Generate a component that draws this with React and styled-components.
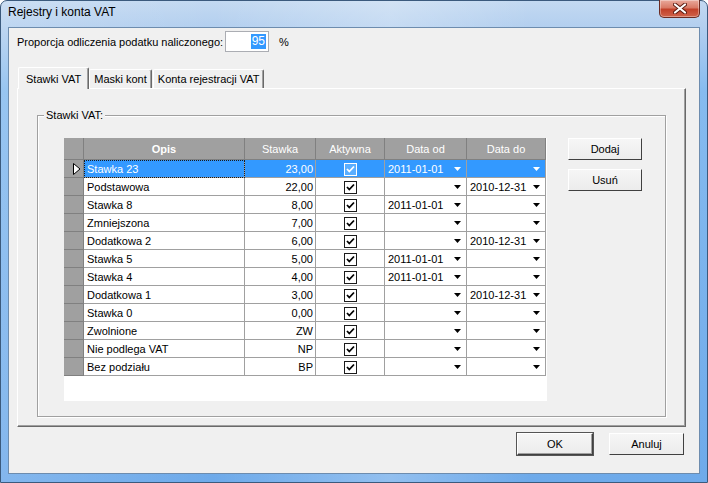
import React from 'react'
import styled, { createGlobalStyle } from 'styled-components'

const GlobalStyle = createGlobalStyle`
  html, body {
    margin: 0;
    padding: 0;
    background: #fff;
  }
  body {
    font-family: "Liberation Sans", Arial, sans-serif;
    font-size: 11px;
    color: #000;
  }
`

const rates = [
  { name: 'Stawka 23', rate: '23,00', from: '2011-01-01', to: '' },
  { name: 'Podstawowa', rate: '22,00', from: '', to: '2010-12-31' },
  { name: 'Stawka 8', rate: '8,00', from: '2011-01-01', to: '' },
  { name: 'Zmniejszona', rate: '7,00', from: '', to: '' },
  { name: 'Dodatkowa 2', rate: '6,00', from: '', to: '2010-12-31' },
  { name: 'Stawka 5', rate: '5,00', from: '2011-01-01', to: '' },
  { name: 'Stawka 4', rate: '4,00', from: '2011-01-01', to: '' },
  { name: 'Dodatkowa 1', rate: '3,00', from: '', to: '2010-12-31' },
  { name: 'Stawka 0', rate: '0,00', from: '', to: '' },
  { name: 'Zwolnione', rate: 'ZW', from: '', to: '' },
  { name: 'Nie podlega VAT', rate: 'NP', from: '', to: '' },
  { name: 'Bez podziału', rate: 'BP', from: '', to: '' },
]

const columns = [20, 161, 71, 69, 82, 79]

const DropArrow = () => (
  <ArrowIcon width="7" height="4" viewBox="0 0 7 4">
    <polygon points="0,0 7,0 3.5,4" fill="currentColor" />
  </ArrowIcon>
)

const CheckMark = () => (
  <svg width="11" height="11" viewBox="0 0 11 11">
    <path d="M2 5 L4.3 7.5 L9 2.5" fill="none" stroke="currentColor" strokeWidth="1.8" />
  </svg>
)

const RowPointer = () => (
  <svg width="8" height="12" viewBox="0 0 8 12">
    <polygon points="0.5,0.5 7,6 0.5,11.5" fill="#fff" stroke="#000" strokeWidth="1" />
  </svg>
)

const App = () => {
  return (
    <>
      <GlobalStyle />
      <Window>
        <TitleBar>
          <Title>Rejestry i konta VAT</Title>
          <CloseButton>
            <svg width="14" height="11" viewBox="0 0 14 11">
              <path d="M2 1.5 L12 9.5 M12 1.5 L2 9.5" stroke="#5a1a10" strokeWidth="4" strokeLinecap="round" />
              <path d="M2 1.5 L12 9.5 M12 1.5 L2 9.5" stroke="#fff" strokeWidth="2.2" strokeLinecap="round" />
            </svg>
          </CloseButton>
        </TitleBar>
        <Client>
          <ProportionRow>
            <FieldLabel>Proporcja odliczenia podatku naliczonego:</FieldLabel>
            <NumberBox><SelectedText>95</SelectedText></NumberBox>
            <Percent>%</Percent>
          </ProportionRow>

          <TabStrip>
            <Tab $active>Stawki VAT</Tab>
            <Tab>Maski kont</Tab>
            <Tab $gap>Konta rejestracji VAT</Tab>
          </TabStrip>

          <TabPanel>
            <GroupBox>
              <GroupLabel>Stawki VAT:</GroupLabel>
              <Grid>
                <Table>
                  <colgroup>
                    {columns.map((w, i) => <Col key={i} $w={w} />)}
                  </colgroup>
                  <thead>
                    <HeadRow>
                      <HeadCell />
                      <HeadCell $bold>Opis</HeadCell>
                      <HeadCell>Stawka</HeadCell>
                      <HeadCell>Aktywna</HeadCell>
                      <HeadCell>Data od</HeadCell>
                      <HeadCell>Data do</HeadCell>
                    </HeadRow>
                  </thead>
                  <tbody>
                    {rates.map((r, i) => {
                      const sel = i === 0
                      return (
                        <Row key={r.name}>
                          <RowHeader>{sel && <RowPointer />}</RowHeader>
                          <Cell $sel={sel} $focus={sel}>{r.name}</Cell>
                          <Cell $sel={sel} $right>{r.rate}</Cell>
                          <Cell $sel={sel} $center>
                            <CheckBox $sel={sel}><CheckMark /></CheckBox>
                          </Cell>
                          <Cell $sel={sel}>
                            <DateBox>{r.from}<DropArrow /></DateBox>
                          </Cell>
                          <Cell $sel={sel}>
                            <DateBox>{r.to}<DropArrow /></DateBox>
                          </Cell>
                        </Row>
                      )
                    })}
                  </tbody>
                </Table>
              </Grid>
              <SideButtons>
                <Button>Dodaj</Button>
                <Button>Usuń</Button>
              </SideButtons>
            </GroupBox>
          </TabPanel>

          <DialogButtons>
            <Button $default>OK</Button>
            <Button>Anuluj</Button>
          </DialogButtons>
        </Client>
      </Window>
    </>
  )
}

const Window = styled.div`
  width: 708px;
  height: 483px;
  box-sizing: border-box;
  display: flex;
  flex-direction: column;
  border: 1px solid #3b5a7d;
  border-radius: 7px 7px 0 0;
  padding: 0 7px 8px 7px;
  background:
    linear-gradient(90deg, rgba(255,255,255,0.15) 0%, rgba(255,255,255,0) 30%, rgba(255,255,255,0.25) 55%, rgba(255,255,255,0) 75%),
    linear-gradient(180deg, #c3d9f1 0px, #b3cfef 26px, #86bbef 90px, #6eaaea 100%);
`

const TitleBar = styled.div`
  height: 26px;
  display: flex;
  align-items: flex-start;
`

const Title = styled.div`
  padding-top: 4px;
  font-size: 12px;
  line-height: 15px;
  color: #000;
`

const CloseButton = styled.div`
  margin-left: auto;
  width: 41px;
  height: 18px;
  margin-top: -1px;
  box-sizing: border-box;
  border: 1px solid #6b2b22;
  border-top: none;
  border-radius: 0 0 5px 5px;
  background: linear-gradient(180deg, #e9a99c 0%, #d97a66 45%, #c2412a 55%, #d0634a 100%);
  box-shadow: inset 0 0 0 1px rgba(255,255,255,0.35);
  display: flex;
  align-items: center;
  justify-content: center;
`

const Client = styled.div`
  flex: 1;
  display: flex;
  flex-direction: column;
  background: #f0f0f0;
  border: 1px solid #6d8cae;
`

const ProportionRow = styled.div`
  display: flex;
  align-items: center;
  height: 21px;
  margin-top: 3px;
  padding-left: 8px;
`

const FieldLabel = styled.span`
  width: 208px;
  white-space: nowrap;
`

const NumberBox = styled.div`
  width: 44px;
  height: 21px;
  box-sizing: border-box;
  border: 1px solid #abadb3;
  background: #fff;
  display: flex;
  align-items: center;
  justify-content: flex-end;
  padding-right: 2px;
`

const SelectedText = styled.span`
  background: #3399ff;
  color: #fff;
  font-size: 12px;
  line-height: 15px;
  padding: 0 1px;
`

const Percent = styled.span`
  margin-left: 10px;
`

const TabStrip = styled.div`
  display: flex;
  align-items: flex-end;
  height: 21px;
  margin-top: 15px;
  padding-left: 9px;
  position: relative;
  z-index: 1;
`

const Tab = styled.div`
  box-sizing: border-box;
  height: ${p => (p.$active ? 22 : 19)}px;
  margin-bottom: ${p => (p.$active ? -1 : 0)}px;
  margin-left: ${p => (p.$gap ? 1 : 0)}px;
  padding: 0 ${p => (p.$active ? 7 : 4)}px;
  display: flex;
  align-items: center;
  white-space: nowrap;
  background: #f0f0f0;
  border-top: 1px solid #fff;
  border-left: 1px solid #fff;
  border-right: 1px solid #696969;
  box-shadow: inset -1px 0 0 #a0a0a0;
  border-radius: 2px 2px 0 0;
`

const TabPanel = styled.div`
  height: 339px;
  box-sizing: border-box;
  margin: 0 13px 0 8px;
  border: 1px solid;
  border-color: #fff #696969 #696969 #fff;
  box-shadow: inset -1px -1px 0 #a0a0a0;
  display: flex;
  flex-direction: column;
`

const GroupBox = styled.div`
  position: relative;
  height: 302px;
  box-sizing: border-box;
  margin: 26px 19px 0 19px;
  border: 1px solid #a0a0a0;
  box-shadow: inset 1px 1px 0 #fff, 1px 1px 0 #fff;
  padding: 22px 0 0 26px;
  display: flex;
  align-items: flex-start;
`

const GroupLabel = styled.span`
  position: absolute;
  top: -8px;
  left: 6px;
  padding: 0 2px;
  background: #f0f0f0;
  line-height: 14px;
`

const Grid = styled.div`
  width: 483px;
  height: 263px;
  background: #fff;
  overflow: hidden;
`

const Table = styled.table`
  table-layout: fixed;
  border-collapse: separate;
  border-spacing: 0;
  width: 482px;
`

const Col = styled.col`
  width: ${p => p.$w}px;
`

const HeadRow = styled.tr`
  height: 22px;
`

const HeadCell = styled.th`
  padding: 0;
  background: #a0a0a0;
  color: #fff;
  font-size: 11px;
  font-weight: ${p => (p.$bold ? 700 : 400)};
  text-align: center;
  border-right: 1px solid #808080;
  border-bottom: 1px solid #808080;
`

const Row = styled.tr`
  height: 18px;
`

const RowHeader = styled.td`
  padding: 0 0 0 9px;
  background: #a0a0a0;
  border-right: 1px solid #808080;
  border-bottom: 1px solid #808080;
  line-height: 0;
  vertical-align: middle;
`

const Cell = styled.td`
  padding: 0 2px 0 3px;
  white-space: nowrap;
  overflow: hidden;
  line-height: 16px;
  text-align: ${p => (p.$right ? 'right' : p.$center ? 'center' : 'left')};
  background: ${p => (p.$sel ? '#3399ff' : '#fff')};
  color: ${p => (p.$sel ? '#fff' : '#000')};
  border-right: 1px solid #a0a0a0;
  border-bottom: 1px solid #a0a0a0;
  outline: ${p => (p.$focus ? '1px dotted #1a1a1a' : 'none')};
  outline-offset: -1px;
`

const DateBox = styled.div`
  display: flex;
  align-items: center;
  padding-right: 3px;
  height: 16px;
`

const ArrowIcon = styled.svg`
  margin-left: auto;
  flex: none;
`

const CheckBox = styled.span`
  display: inline-flex;
  align-items: center;
  justify-content: center;
  width: 13px;
  height: 13px;
  box-sizing: border-box;
  border: 1px solid ${p => (p.$sel ? '#fff' : '#1c1c1c')};
  background: ${p => (p.$sel ? '#5aaeff' : '#fff')};
  color: ${p => (p.$sel ? '#fff' : '#000')};
  vertical-align: middle;
`

const SideButtons = styled.div`
  display: flex;
  flex-direction: column;
  gap: 9px;
  margin-left: 21px;
`

const Button = styled.button`
  width: ${p => (p.$default ? 76 : 75)}px;
  height: 22px;
  box-sizing: border-box;
  padding: 0;
  font-family: "Liberation Sans", Arial, sans-serif;
  font-size: 11px;
  color: #000;
  background: linear-gradient(180deg, #f6f6f6 0%, #ececec 100%);
  border: 1px solid;
  border-color: #fff #404040 #404040 #fff;
  box-shadow: inset -1px -1px 0 #a0a0a0, ${p => (p.$default ? '0 0 0 1px #555' : 'none')};
  ${SideButtons} & {
    width: 74px;
  }
`

const DialogButtons = styled.div`
  display: flex;
  justify-content: flex-end;
  gap: 16px;
  margin-top: 6px;
  padding-right: 15px;
`

export default App
